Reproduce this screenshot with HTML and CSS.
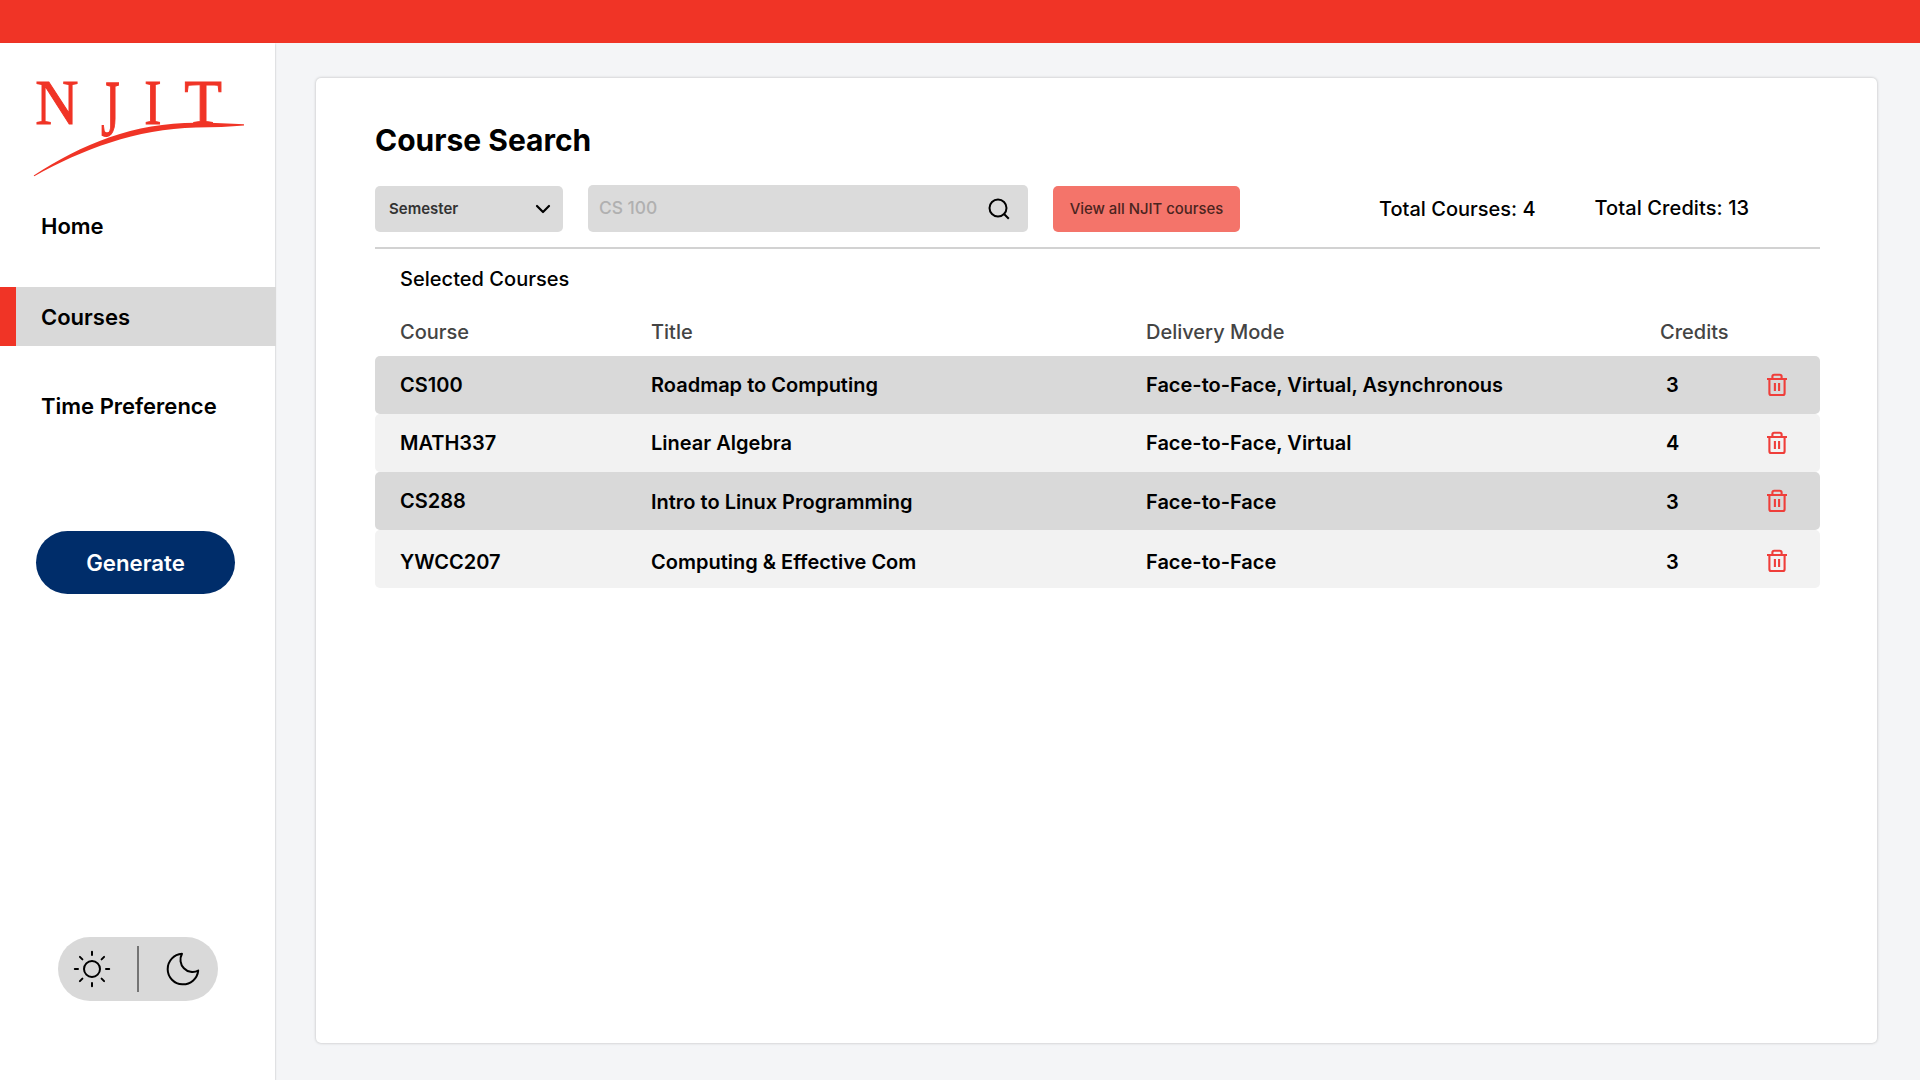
FILE: index.html
```html
<!DOCTYPE html>
<html lang="en">
<head>
<meta charset="utf-8">
<title>Course Search</title>
<link rel="stylesheet" href="styles.css">
</head>
<body>
<svg class="sprite" aria-hidden="true">
  <symbol id="trash" viewBox="0 0 22 24">
    <path d="M1 6h20M3.4 6v14.2q0 1.8 1.8 1.8h11.6q1.8 0 1.8-1.8V6M6.4 6V3.6q0-1.8 1.8-1.8h5.6q1.8 0 1.8 1.8V6M8.9 10v8M13.1 10v8"/>
  </symbol>
</svg>
<header class="topbar"></header>
<div class="shell">
  <aside class="sidebar">
    <svg class="logo" viewBox="30 60 216 118" role="img" aria-label="NJIT">
      <g class="logo-letters">
        <text transform="translate(35.300 123.900) scale(.95 1)">N</text>
        <text transform="translate(101 135.600) scale(.76 1.270)">J</text>
        <text transform="translate(144.300 123.900) scale(.82 1)">I</text>
        <text transform="translate(184.300 123.900) scale(.98 1)">T</text>
      </g>
      <path class="swoosh" d="M33.700 175.600C82 143.800 134 122.700 196 122.700C214 122.700 230 123.400 244 124.300V125.400C230 126.500 214 127.300 196 127.500C136 129 82 149.500 34.300 176.200Z"/>
    </svg>
    <nav class="nav">
      <a class="nav-item">Home</a>
      <a class="nav-item active">Courses</a>
      <a class="nav-item">Time Preference</a>
    </nav>
    <button class="generate">Generate</button>
    <div class="theme">
      <svg class="sun" viewBox="-19 -19 38 38"><circle r="8"/><path d="M0-17.200v3.200M0 14v3.200M-17.200 0h3.200M14 0h3.200M-12.100-12.100l2.500 2.500M12.100-12.100l-2.500 2.500M-12.100 12.100l2.500-2.500M12.100 12.100l-2.500-2.500"/></svg>
      <span class="theme-divider"></span>
      <svg class="moon" viewBox="166 952 34 34"><path d="M182 953.800A15.300 15.300 0 1 0 198.200 970.600A12.200 12.200 0 0 1 182 953.800Z"/></svg>
    </div>
  </aside>
  <main class="card">
    <h1 class="title">Course Search</h1>
    <div class="toolbar">
      <div class="select"><span>Semester</span><svg class="chevron" viewBox="0 0 16 10"><path d="M2 2l6 6 6-6"/></svg></div>
      <div class="search"><span>CS 100</span><svg class="glass" viewBox="0 0 22 22"><circle cx="10" cy="10" r="8.500"/><path d="M15.800 15.800l5 5"/></svg></div>
      <button class="view-all">View all NJIT courses</button>
      <span class="total courses">Total Courses: 4</span>
      <span class="total credits">Total Credits: 13</span>
    </div>
    <h2 class="subtitle">Selected Courses</h2>
    <div class="row head"><span>Course</span><span>Title</span><span>Delivery Mode</span><span>Credits</span></div>
    <div class="row dark"><span>CS100</span><span>Roadmap to Computing</span><span>Face-to-Face, Virtual, Asynchronous</span><span class="num">3</span><svg class="trash"><use href="#trash"/></svg></div>
    <div class="row"><span>MATH337</span><span>Linear Algebra</span><span>Face-to-Face, Virtual</span><span class="num">4</span><svg class="trash"><use href="#trash"/></svg></div>
    <div class="row dark third"><span>CS288</span><span>Intro to Linux Programming</span><span>Face-to-Face</span><span class="num">3</span><svg class="trash"><use href="#trash"/></svg></div>
    <div class="row last"><span>YWCC207</span><span>Computing &amp; Effective Com</span><span>Face-to-Face</span><span class="num">3</span><svg class="trash"><use href="#trash"/></svg></div>
  </main>
</div>
</body>
</html>
```
FILE: styles.css
```css
* { box-sizing: border-box; }
body {
  margin: 0;
  height: 1080px;
  display: flex;
  flex-direction: column;
  background: #f4f5f7;
  color: #000;
  font-family: Inter, "Liberation Sans", sans-serif;
  overflow: hidden;
}
button { border: 0; padding: 0; font-family: inherit; }
svg { display: block; fill: none; stroke: #000; flex: none; }
.sprite { width: 0; height: 0; position: absolute; }
.topbar { height: 43px; background: #f03426; flex: none; }
.shell { flex: 1; display: flex; align-items: flex-start; }

.sidebar {
  width: 275px;
  height: 1037px;
  background: #fff;
  box-shadow: 0 1px 2px rgba(0, 0, 0, .25);
  display: flex;
  flex-direction: column;
}
.logo { width: 216px; height: 118px; margin: 17px 0 0 30px; }
.logo-letters { fill: #f03426; stroke: #f03426; stroke-width: 1; font: 63px "Liberation Serif", serif; }
.swoosh { fill: #f03426; stroke: none; }
.nav { display: flex; flex-direction: column; gap: 31px; margin-top: 19px; }
.nav-item {
  height: 59px;
  line-height: 59px;
  padding-left: 41px;
  font-size: 22px;
  font-weight: 600;
}
.nav-item.active { width: 276px; background: #d9d9d9; border-left: 16px solid #f03426; padding-left: 25px; line-height: 60px; }
.generate {
  width: 199px;
  height: 63px;
  margin: 95px 0 0 36px;
  border-radius: 32px;
  background: #002d6a;
  color: #fff;
  font-size: 22.200px;
  font-weight: 600;
}
.theme {
  width: 160px;
  height: 64px;
  margin: 343px 0 0 58px;
  padding: 0 18px 0 15px;
  border-radius: 32px;
  background: #d9d9d9;
  display: flex;
  align-items: center;
  justify-content: space-between;
}
.theme-divider { width: 2px; height: 46px; background: #747474; margin-right: 1px; }
.sun { width: 38px; height: 38px; stroke-width: 2; stroke-linecap: round; }
.moon { width: 34px; height: 34px; stroke-width: 2; stroke-linejoin: round; }

.card {
  width: 1561px;
  height: 965px;
  margin: 35px 0 0 41px;
  padding: 42px 57px 0 59px;
  border-radius: 5px;
  background: #fff;
  box-shadow: 0 0 3px rgba(0, 0, 0, .25);
}
.title { margin: 0; font-size: 30px; line-height: 40px; font-weight: 700; }
.toolbar {
  height: 64px;
  margin-top: 25px;
  border-bottom: 2px solid #d2d2d2;
  display: flex;
  align-items: flex-start;
}
.select, .search { background: #dbdbdb; border-radius: 5px; display: flex; align-items: center; justify-content: space-between; }
.select { width: 188px; height: 46px; margin-top: 1px; padding: 0 12px 0 14px; font-size: 15px; font-weight: 600; color: #333; }
.select span { padding-bottom: 1px; }
.chevron { width: 16px; height: 10px; stroke-width: 2.2; stroke-linecap: round; stroke-linejoin: round; }
.search { width: 440px; height: 47px; margin-left: 25px; padding: 0 18px 0 11px; font-size: 17.400px; font-weight: 500; color: #b0b0b0; }
.search span { padding-bottom: 2px; }
.glass { width: 22px; height: 22px; stroke-width: 2; }
.view-all { width: 187px; height: 46px; margin: 1px 0 0 25px; border-radius: 5px; background: #f4746a; color: #4b2420; font-size: 14.900px; font-weight: 500; }
.total { font-size: 20px; line-height: 24px; font-weight: 500; white-space: nowrap; }
.courses { margin: 12px 0 0 139px; width: 215.500px; }
.credits { margin-top: 11px; letter-spacing: .1px; }
.subtitle { margin: 18px 0 0 25px; font-size: 20px; line-height: 24px; font-weight: 500; letter-spacing: .03px; }

.row {
  height: 58px;
  padding-left: 25px;
  border-radius: 5px;
  background: #f2f2f2;
  display: grid;
  grid-template-columns: 251px 495px 514px 106px 22px;
  align-items: center;
  font-size: 20px;
  line-height: 24px;
  font-weight: 600;
}
.row.dark { background: #d9d9d9; }
.row.head { height: 48px; margin-top: 17px; background: none; color: #444; font-weight: 500; }
.num { padding-left: 6px; }
.trash { width: 22px; height: 24px; stroke: #ef3e3a; stroke-width: 2.1; }
.third span:not(:first-child) { padding-top: 2px; }
.last span { padding-top: 6px; }
.last .trash { margin-top: 4px; }
```
